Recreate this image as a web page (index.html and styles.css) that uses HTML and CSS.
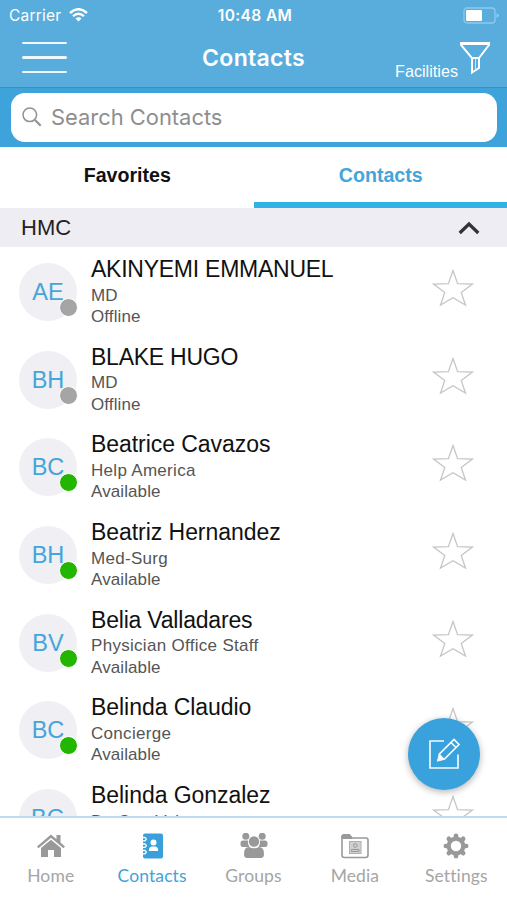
FILE: index.html
```html
<!DOCTYPE html>
<html lang="en">
  <head>
    <meta charset="utf-8" />
    <meta name="viewport" content="width=device-width, initial-scale=1" />
    <title>Contacts</title>
    <link rel="stylesheet" href="styles.css">
  </head>
  <body>
    <svg class="defs" width="0" height="0">
      <symbol id="star" viewBox="0 0 42 38">
        <path d="M21 1.500 L25.600 14.600 L40.500 15 L29.200 23.400 L33.500 36 L21 28.800 L8.500 36 L12.800 23.400 L1.500 15 L16.400 14.600 Z" fill="none" stroke="#c6c6c6" stroke-width="1.300" />
      </symbol>
    </svg>
    <div class="app">
      <header class="header">
        <div class="status-bar">
          <div class="carrier">
            <span class="carrier-name">Carrier</span>
            <svg width="19" height="14" viewBox="0 0 19 14" fill="none" stroke="#fff" stroke-width="2.400">
              <path d="M1 5 Q9.500 -2.600 18 5" />
              <path d="M4 8.200 Q9.500 3.400 15 8.200" />
              <path d="M9.500 13.500 L6.500 10.500 Q9.500 8 12.500 10.500 Z" fill="#fff" stroke="none" />
            </svg>
          </div>
          <div class="time">10:48 AM</div>
          <svg class="battery" width="37" height="17" viewBox="0 0 37 17">
            <rect x="1" y="1" width="31" height="15" rx="3" fill="none" stroke="#8ccaec" stroke-width="1.300" />
            <rect x="3" y="3" width="16" height="11" rx="1" fill="#fff" />
            <path d="M33.500 6 Q36 7 36 8.500 Q36 10 33.500 11 Z" fill="#8ccaec" />
          </svg>
        </div>
        <div class="nav-bar">
          <div class="menu"><span></span><span></span><span></span></div>
          <h1 class="title">Contacts</h1>
          <div class="filter">
            <span class="filter-label">Facilities</span>
            <svg width="32" height="34" viewBox="0 0 32 34" fill="none" stroke="#fff" stroke-width="2">
              <path d="M2 2 H30 V4 L20 17 V27 L13 31.500 V17 L2 4 Z" />
              <path d="M2 3 H30 M13 17 H20" />
              <path d="M16.500 18 V28" stroke-width="1" stroke="#cbe8f8" />
            </svg>
          </div>
        </div>
      </header>

      <div class="search">
        <div class="search-box">
          <svg width="20" height="20" viewBox="0 0 20 20" fill="none" stroke="#929292">
            <circle cx="7.800" cy="7.800" r="6.800" stroke-width="1.500" />
            <path d="M13 13 L18.700 18.700" stroke-width="2.200" />
          </svg>
          <span class="placeholder">Search Contacts</span>
        </div>
      </div>

      <div class="tabs">
        <div class="tab"><span>Favorites</span></div>
        <div class="tab active"><span>Contacts</span></div>
      </div>

      <div class="section">
        <span class="section-name">HMC</span>
        <svg width="22" height="14" viewBox="0 0 22 14" fill="none" stroke="#333237" stroke-width="3.200">
          <path d="M1.700 12 L11 3 L20.300 12" />
        </svg>
      </div>

      <main class="list">
        <div class="contact">
          <div class="avatar">AE<i class="dot offline"></i></div>
          <div class="info">
            <div class="name caps">AKINYEMI EMMANUEL</div>
            <div class="detail">MD</div>
            <div class="detail">Offline</div>
          </div>
          <svg class="star"><use href="#star" /></svg>
        </div>
        <div class="contact">
          <div class="avatar">BH<i class="dot offline"></i></div>
          <div class="info">
            <div class="name caps">BLAKE HUGO</div>
            <div class="detail">MD</div>
            <div class="detail">Offline</div>
          </div>
          <svg class="star"><use href="#star" /></svg>
        </div>
        <div class="contact">
          <div class="avatar">BC<i class="dot"></i></div>
          <div class="info">
            <div class="name">Beatrice Cavazos</div>
            <div class="detail wide">Help America</div>
            <div class="detail">Available</div>
          </div>
          <svg class="star"><use href="#star" /></svg>
        </div>
        <div class="contact">
          <div class="avatar">BH<i class="dot"></i></div>
          <div class="info">
            <div class="name">Beatriz Hernandez</div>
            <div class="detail wide">Med-Surg</div>
            <div class="detail">Available</div>
          </div>
          <svg class="star"><use href="#star" /></svg>
        </div>
        <div class="contact">
          <div class="avatar">BV<i class="dot"></i></div>
          <div class="info">
            <div class="name tight">Belia Valladares</div>
            <div class="detail wide">Physician Office Staff</div>
            <div class="detail">Available</div>
          </div>
          <svg class="star"><use href="#star" /></svg>
        </div>
        <div class="contact">
          <div class="avatar">BC<i class="dot"></i></div>
          <div class="info">
            <div class="name">Belinda Claudio</div>
            <div class="detail wide">Concierge</div>
            <div class="detail">Available</div>
          </div>
          <svg class="star"><use href="#star" /></svg>
        </div>
        <div class="contact">
          <div class="avatar">BG<i class="dot"></i></div>
          <div class="info">
            <div class="name">Belinda Gonzalez</div>
            <div class="detail">Dr. Otto Velez</div>
            <div class="detail">Available</div>
          </div>
          <svg class="star"><use href="#star" /></svg>
        </div>
      </main>

      <div class="compose">
        <svg width="34" height="34" viewBox="0 0 34 34" fill="none" stroke="#f2faff" stroke-width="1.700">
          <path d="M17 4 H3 V31 H31 V17.500" />
          <path d="M11.500 23 L12.500 17 L27 2.500 L32 7.500 L17.500 22 Z M24 5.500 L29 10.500" />
          <path d="M11 23.500 L12.500 18 L16.500 22 Z" fill="#f2faff" />
        </svg>
      </div>

      <nav class="tab-bar">
        <div class="item">
          <svg width="30" height="26" viewBox="0 0 30 26" fill="#999">
            <path d="M1 13.500 L15 1.500 L20.500 6.200 V2 H24.500 V9.600 L29 13.500 L27.500 15.200 L15 4.800 L2.500 15.200 Z" />
            <path d="M5 15 L15 6.700 L25 15 V24 H18 V17 H12 V24 H5 Z" />
          </svg>
          <span>Home</span>
        </div>
        <div class="item active">
          <svg width="30" height="26" viewBox="0 0 30 26">
            <rect x="6" y="0.500" width="20" height="25" rx="2" fill="#3aa0da" />
            <circle cx="16.500" cy="9.500" r="3" fill="#fff" />
            <path d="M12 18 V16 Q12.500 13.500 14.500 13.500 H18.500 Q20.500 13.500 21 16 V18 Z" fill="#fff" />
            <g fill="none" stroke="#fff" stroke-width="1.300">
              <path d="M5 4.500 H8 Q10.500 6 8 7.800 H5" />
              <path d="M5 11 H8 Q10.500 12.500 8 14.300 H5" />
              <path d="M5 17.500 H8 Q10.500 19 8 20.800 H5" />
            </g>
          </svg>
          <span>Contacts</span>
        </div>
        <div class="item">
          <svg width="30" height="26" viewBox="0 0 30 26" fill="#999">
            <circle cx="6.800" cy="3.200" r="3.500" />
            <circle cx="23.200" cy="3.200" r="3.500" />
            <circle cx="15" cy="8.500" r="5.200" />
            <path d="M1.500 10 Q1.500 7.500 4 7.500 H9 Q8.500 11 10.500 14 H4 Q1.500 14 1.500 11.500 Z" />
            <path d="M28.500 10 Q28.500 7.500 26 7.500 H21 Q21.500 11 19.500 14 H26 Q28.500 14 28.500 11.500 Z" />
            <path d="M5 21 Q5 14 10 14 Q15 16.500 20 14 Q25 14 25 21 Q25 25 22 25 H8 Q5 25 5 21 Z" />
          </svg>
          <span>Groups</span>
        </div>
        <div class="item">
          <svg width="30" height="26" viewBox="0 0 30 26" fill="none" stroke="#999">
            <path d="M2 22 V4 Q2 2 4 2 H9.500 L12 5 H26 Q28 5 28 7 V22 Q28 24.500 25.500 24.500 H4.500 Q2 24.500 2 22 Z" stroke-width="1.600" />
            <path d="M2 5.500 V3 Q2 1.500 4 1.500 H9.500 L12 5.500 Z" fill="#999" />
            <rect x="9.500" y="8.500" width="11.500" height="12" fill="#d0d0d0" stroke="#b0b0b0" />
            <circle cx="15.300" cy="12.500" r="1.800" />
            <path d="M11.500 18.500 V16.500 H19 V18.500 Z" />
          </svg>
          <span>Media</span>
        </div>
        <div class="item">
          <svg width="30" height="26" viewBox="-15 -13 30 26" fill="none" stroke="#999">
            <circle r="7.300" stroke-width="4.200" />
            <g stroke-width="4.600" stroke-linecap="round">
              <path d="M0 -8 V-10.200 M0 8 V10.200 M-8 0 H-10.200 M8 0 H10.200" />
              <path d="M-5.800 -5.800 L-7.200 -7.200 M5.800 5.800 L7.200 7.200 M-5.800 5.800 L-7.200 7.200 M5.800 -5.800 L7.200 -7.200" />
            </g>
          </svg>
          <span>Settings</span>
        </div>
      </nav>
    </div>
  </body>
</html>
```

FILE: styles.css
```css
* {
  box-sizing: border-box;
}
body {
  margin: 0;
  font-family: "Liberation Sans", Arial, sans-serif;
  background: #fff;
}
svg {
  display: block;
  flex-shrink: 0;
}
.defs {
  position: absolute;
}
.app {
  position: relative;
  display: flex;
  flex-direction: column;
  width: 507px;
  height: 900px;
  overflow: hidden;
}
.header {
  height: 88px;
  background: #58addd;
  border-bottom: 1px solid #3c8fc0;
  color: #fff;
}
.status-bar {
  display: grid;
  grid-template-columns: 1fr auto 1fr;
  align-items: center;
  height: 30px;
  padding: 0 7px 0 9px;
  font-family: Inter, sans-serif;
}
.carrier {
  display: flex;
  align-items: center;
  gap: 8px;
  font-size: 15.5px;
  letter-spacing: 0.2px;
}
.time {
  padding-left: 1px;
  font-size: 15.5px;
  font-weight: 600;
  letter-spacing: 0.4px;
}
.battery {
  justify-self: end;
}
.nav-bar {
  display: grid;
  grid-template-columns: 1fr auto 1fr;
  align-items: center;
  height: 55px;
  padding: 0 16px 0 16px;
}
.menu {
  display: flex;
  flex-direction: column;
  gap: 12px;
  width: 45px;
  margin-left: 6px;
}
.menu span {
  height: 2.5px;
  border-radius: 2px;
  background: #eef9ff;
}
.title {
  margin: 0;
  font-family: Inter, sans-serif;
  font-size: 23px;
  font-weight: 600;
  letter-spacing: 0.3px;
}
.filter {
  display: flex;
  justify-content: flex-end;
  align-items: flex-end;
}
.filter-label {
  margin: 0 1px -5px 0;
  font-size: 16.2px;
  line-height: 18px;
}
.search {
  height: 59px;
  padding: 5px 10px 5px 11px;
  background: #3ea2db;
}
.search-box {
  display: flex;
  align-items: center;
  gap: 9px;
  height: 49px;
  padding: 0 0 2px 11px;
  border-radius: 14px;
  background: #fff;
  color: #8e8e8e;
  font-family: Inter, sans-serif;
  font-size: 21.9px;
}
.tabs {
  display: flex;
  height: 61px;
}
.tab {
  flex: 1;
  height: 61px;
  padding: 16px 0 0 1px;
  text-align: center;
  font-size: 19.6px;
  line-height: 24px;
  font-weight: bold;
  color: #111;
}
.tab.active {
  color: #45a5da;
  border-bottom: 6px solid #30b2e5;
}
.section {
  display: flex;
  align-items: center;
  justify-content: space-between;
  height: 39px;
  padding: 0 27px 0 21px;
  background: #eeedf3;
  color: #222;
  font-size: 22px;
}
.list {
  flex: 1;
  min-height: 0;
  overflow: hidden;
  padding-top: 9px;
}
.contact {
  display: flex;
  height: 87.7px;
  padding-left: 19px;
}
.avatar {
  position: relative;
  width: 58px;
  height: 58px;
  margin-top: 7px;
  border-radius: 50%;
  background: #efeff4;
  color: #45a5da;
  font-size: 23.5px;
  line-height: 58px;
  text-align: center;
}
.dot {
  position: absolute;
  right: -1px;
  bottom: 4px;
  width: 19px;
  height: 19px;
  border: 1.5px solid #fff;
  border-radius: 50%;
  background: #22b600;
}
.dot.offline {
  background: #a5a5a5;
}
.info {
  width: 341px;
  margin-left: 14px;
  white-space: nowrap;
}
.name {
  margin-bottom: 1.5px;
  color: #111;
  font-size: 23px;
  line-height: 27px;
  letter-spacing: -0.05px;
}
.name.caps {
  letter-spacing: -0.25px;
}
.name.tight {
  letter-spacing: -0.2px;
}
.detail {
  color: #555;
  font-size: 17px;
  line-height: 21.5px;
  letter-spacing: 0.1px;
}
.detail.wide {
  letter-spacing: 0.3px;
}
.star {
  width: 42px;
  height: 38px;
  margin-top: 13px;
}
.compose {
  position: absolute;
  left: 408px;
  top: 718px;
  display: flex;
  align-items: center;
  justify-content: center;
  width: 72px;
  height: 72px;
  border-radius: 50%;
  background: #39a1dc;
  box-shadow: 0 2px 7px rgba(0, 0, 0, 0.3);
}
.tab-bar {
  display: flex;
  height: 84px;
  padding-top: 15px;
  border-top: 2px solid #bddcf0;
  background: #fff;
}
.item {
  flex: 1;
  display: flex;
  flex-direction: column;
  align-items: center;
  gap: 5px;
  color: #a5a5a5;
  font-family: Lato, sans-serif;
  font-size: 17.5px;
  line-height: 23px;
  letter-spacing: 0.1px;
  font-variant-ligatures: none;
}
.item.active {
  color: #40a3db;
}
```
